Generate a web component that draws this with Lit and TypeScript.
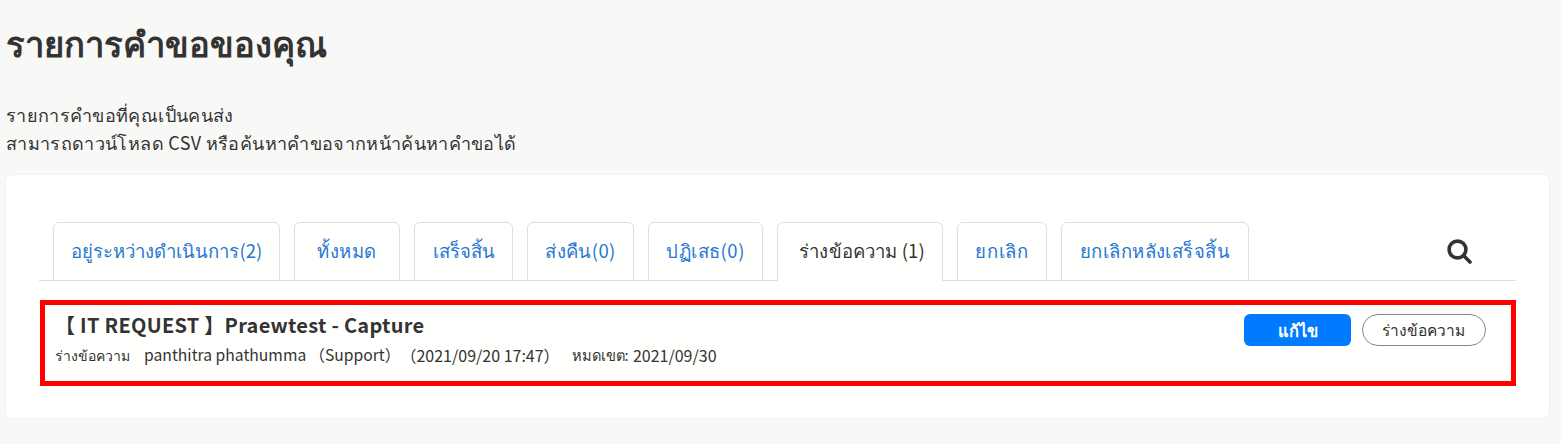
import { LitElement, html, css } from "lit";
import { customElement } from "lit/decorators.js";

const TABS = [
  { label: "อยู่ระหว่างดำเนินการ(2)", width: 227, spacing: 0.05 },
  { label: "ทั้งหมด", width: 106, spacing: 0.5 },
  { label: "เสร็จสิ้น", width: 99, spacing: 0 },
  { label: "ส่งคืน(0)", width: 107, spacing: 0.4 },
  { label: "ปฏิเสธ(0)", width: 115, spacing: 0.5 },
  { label: "ร่างข้อความ (1)", width: 166, spacing: 0.15, active: true },
  { label: "ยกเลิก", width: 90, spacing: 0.7 },
  { label: "ยกเลิกหลังเสร็จสิ้น", width: 188, spacing: 0.45 },
];

@customElement("app-root")
export class AppRoot extends LitElement {
  static styles = css`
    :host {
      display: block;
      min-height: 444px;
      background: #f8f8f6;
      color: #333;
      font-family: "Noto Sans CJK JP", "Noto Sans", sans-serif;
      box-sizing: border-box;
      padding: 20px 12px 0 6px;
    }
    h1 {
      margin: 0;
      font-size: 34.6px;
      line-height: 44px;
      font-weight: 700;
      color: #333;
    }
    .intro {
      margin: 36px 0 0;
      font-size: 18px;
      letter-spacing: 0.35px;
      line-height: 28px;
      color: #333;
    }
    .card {
      margin-top: 19px;
      height: 243px;
      box-sizing: border-box;
      background: #fffffd;
      border-radius: 6px;
      box-shadow: 0 0 2px rgba(0, 0, 0, 0.08);
      padding: 47px 33px 0;
    }
    .tabs {
      display: flex;
      align-items: flex-end;
      gap: 14px;
      height: 59px;
      box-sizing: border-box;
      padding-left: 14px;
      border-bottom: 1px solid #ddd;
    }
    .tab {
      height: 59px;
      margin-bottom: -1px;
      box-sizing: border-box;
      display: flex;
      align-items: center;
      justify-content: center;
      font-size: 18.5px;
      color: #2777d3;
      border: 1px solid #ddd;
      border-radius: 6px 6px 0 0;
      white-space: nowrap;
    }
    .tab.active {
      color: #333;
      padding-left: 4px;
      border-bottom-color: #fffffd;
    }
    .search {
      margin-left: auto;
      align-self: center;
      margin-right: 44px;
      margin-top: 1px;
      display: flex;
    }
    .row {
      margin: 19px 0 0 1px;
      height: 86px;
      box-sizing: border-box;
      border: 5px solid #f00;
      padding: 8px 25px 0 10px;
      display: flex;
      justify-content: space-between;
      align-items: flex-start;
    }
    .title {
      font-size: 20px;
      letter-spacing: 0.27px;
      font-weight: 700;
      line-height: 24px;
      color: #333;
      white-space: nowrap;
    }
    .meta {
      margin-top: 7px;
      display: flex;
      align-items: center;
      font-size: 15.7px;
      line-height: 22px;
      color: #333;
      white-space: nowrap;
    }
    .meta small {
      font-size: 14px;
    }
    .name {
      margin-left: 14px;
    }
    .support {
      margin-left: 3px;
    }
    .stamp {
      font-size: 16px;
    }
    .meta small.due {
      margin-left: 12px;
      margin-right: 1px;
      font-size: 14.6px;
    }
    .actions {
      display: flex;
      gap: 11px;
      margin-top: 1px;
    }
    .btn {
      height: 32px;
      box-sizing: border-box;
      padding-top: 1px;
      display: flex;
      align-items: center;
      justify-content: center;
      font-family: inherit;
    }
    .edit {
      width: 107px;
      background: #007bff;
      color: #fff;
      border-radius: 6px;
      font-weight: 700;
      font-size: 16.5px;
    }
    .draft {
      width: 124px;
      background: #fffffd;
      color: #333;
      border: 1px solid #888;
      border-radius: 16px;
      font-size: 15.5px;
      padding-right: 2px;
    }
  `;

  render() {
    return html`
      <h1>รายการคำขอของคุณ</h1>
      <p class="intro">
        รายการคำขอที่คุณเป็นคนส่ง<br />สามารถดาวน์โหลด CSV หรือค้นหาคำขอจากหน้าค้นหาคำขอได้
      </p>
      <div class="card">
        <div class="tabs">
          ${TABS.map(
            (t) =>
              html`<div
                class="tab ${t.active ? "active" : ""}"
                style="width:${t.width}px;letter-spacing:${t.spacing}px"
              >
                ${t.label}
              </div>`
          )}
          <div class="search">
            <svg width="25" height="25" viewBox="0 0 25 25" fill="none" stroke="#333" stroke-width="3.6">
              <circle cx="10.5" cy="10.5" r="8.4" />
              <path d="M16.5 16.5 L23 23" stroke-linecap="round" />
            </svg>
          </div>
        </div>
        <div class="row">
          <div>
            <div class="title">【 IT REQUEST 】Praewtest - Capture</div>
            <div class="meta">
              <small>ร่างข้อความ</small>
              <span class="name">panthitra phathumma</span>
              <span class="support">（Support）</span>
              <span class="stamp">（2021/09/20 17:47）</span>
              <small class="due">หมดเขต:&nbsp;</small><span class="stamp">2021/09/30</span>
            </div>
          </div>
          <div class="actions">
            <div class="btn edit">แก้ไข</div>
            <div class="btn draft">ร่างข้อความ</div>
          </div>
        </div>
      </div>
    `;
  }
}
